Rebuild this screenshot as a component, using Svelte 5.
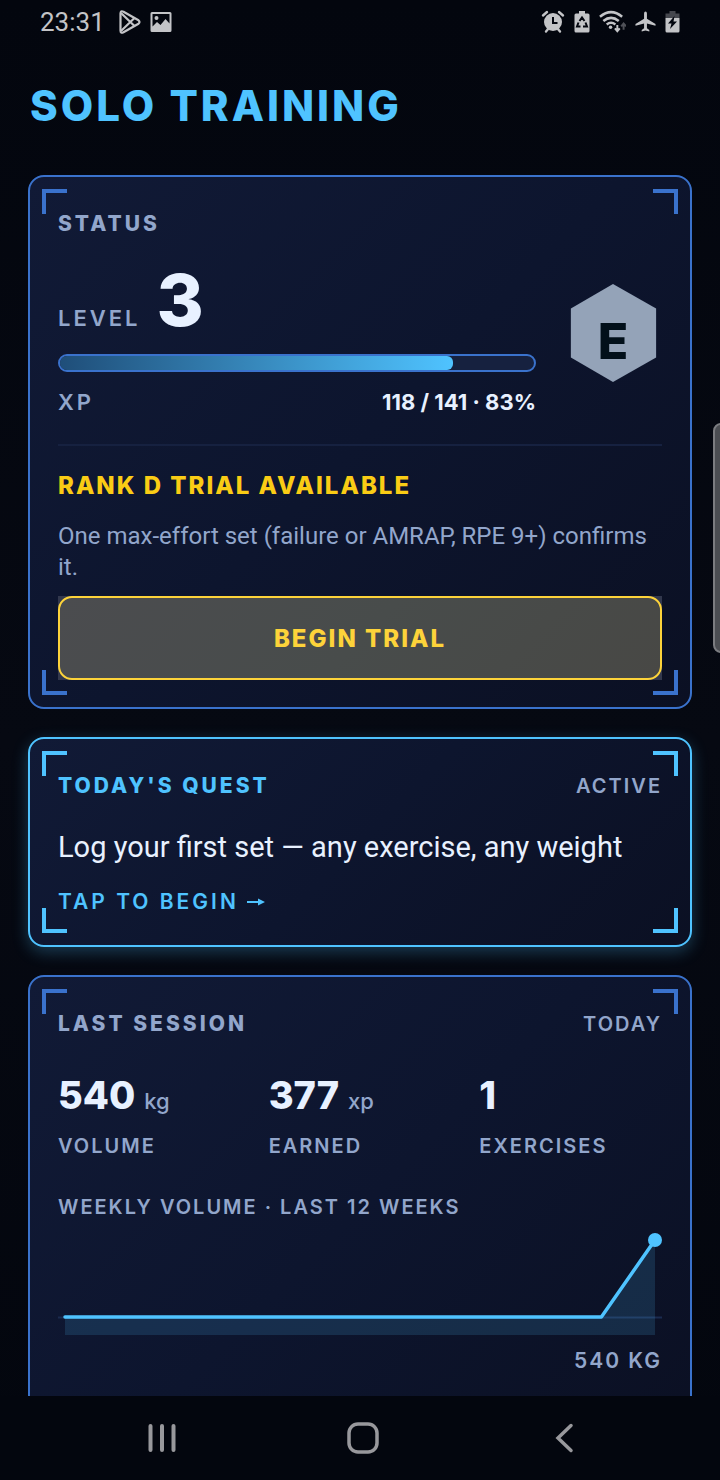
<script lang="ts">
    const level = 3;
    const rank = 'E';
    const xp = { current: 118, needed: 141, percent: 83 };

    const stats = [
        { value: '540', unit: 'kg', label: 'VOLUME' },
        { value: '377', unit: 'xp', label: 'EARNED' },
        { value: '1', unit: '', label: 'EXERCISES' }
    ];

    // twelve weeks, left to right
    const weeks = [0, 0, 0, 0, 0, 0, 0, 0, 0, 0, 0, 540];
    const peak = Math.max(...weeks);
    const points = weeks.map((kg, i) => ({
        x: 7 + (i * 590) / (weeks.length - 1),
        y: 94 - (kg / peak) * 77
    }));
    const line = points.map((p) => `${p.x},${p.y}`).join(' ');
    const last = points[points.length - 1];
</script>

<div class="app">
    <header class="status-bar">
        <div class="status-group">
            <span class="clock">23:31</span>
            <svg class="play" width="22" height="24" viewBox="0 0 22 24" fill="none" stroke="currentColor" stroke-width="2.200" stroke-linejoin="round" aria-hidden="true">
                <path d="M1.500 3.500Q1.500 .2 4.500 1.700L19.500 10.300Q21.500 12 19.500 13.700L4.500 22.300Q1.500 23.800 1.500 20.500Z" />
                <path d="M2 3L15.500 16M2 21L15.500 8" />
            </svg>
            <svg width="22" height="24" viewBox="0 0 22 24" aria-hidden="true">
                <path fill="currentColor" fill-rule="evenodd" d="M2 2h18q1.500 0 1.500 1.500v17q0 1.500-1.500 1.500H2Q.5 22 .5 20.500v-17Q.5 2 2 2ZM2.500 4v12.500l4.500-4.500 3.500 3 5-6 4 4.500V4ZM6.500 6a2 2 0 1 1 0 4a2 2 0 1 1 0-4Z" />
            </svg>
        </div>
        <div class="status-group">
            <svg width="24" height="24" viewBox="0 0 24 24" aria-hidden="true">
                <g stroke="currentColor" stroke-width="2.400" stroke-linecap="round" fill="none">
                    <path d="M2 5.500L6 2M22 5.500L18 2M5 21.500l2.500-3M19 21.500l-2.500-3" />
                </g>
                <circle cx="12" cy="12" r="9" fill="currentColor" />
                <path d="M12 7v6h4.500" stroke="#03060f" stroke-width="2" fill="none" />
            </svg>
            <svg width="16" height="24" viewBox="0 0 16 24" aria-hidden="true">
                <path fill="currentColor" d="M5 1h6v2.500h3q1.500 0 1.500 1.500v16q0 1.500-1.500 1.500H2Q.5 22.500.5 21V5q0-1.500 1.500-1.500h3Z" />
                <g fill="none" stroke="#03060f" stroke-width="2">
                    <path d="M5.500 11L8 7.500l2.500 3.500M4.500 12.500L3 16.500h3.500M9 16.500h4l-1.500-4" />
                </g>
            </svg>
            <svg width="27" height="24" viewBox="0 0 28 24" fill="none" stroke="currentColor" aria-hidden="true">
                <path stroke-width="2.600" d="M1 6.500Q12.500-3 24 6.500M4.500 11Q12.500 4.500 20.500 11M8 14.500Q12.500 11 17 14.500" />
                <circle cx="12" cy="17.500" r="1.800" fill="currentColor" stroke="none" />
                <path stroke-width="2" d="M19 15v6M16.500 18.500L19 21.500l2.500-3" />
                <path stroke-width="2" opacity=".4" d="M25.500 20v-6M23 16.500l2.500-3 2.500 3" />
            </svg>
            <svg width="21" height="24" viewBox="0 0 22 24" aria-hidden="true">
                <path fill="currentColor" d="M11 1q1.500 0 1.500 2v5.500L21.500 14v2l-9-2.500v5L15 20.500V22l-4-1-4 1v-1.500l2.500-2v-5l-9 2.500v-2L9.500 8.500V3Q9.500 1 11 1Z" />
            </svg>
            <svg width="15" height="24" viewBox="0 0 15 24" aria-hidden="true">
                <path fill="currentColor" opacity=".35" d="M4.500 1h6v2.500h4V8H.5V3.500h4Z" />
                <path fill="currentColor" d="M.5 8h14v13q0 1.500-1.500 1.500H2Q.5 22.500.5 21Z" />
                <path fill="#03060f" d="M9.500 6L3 13.500h3.500L5 19l7-7.500H8.500Z" />
            </svg>
        </div>
    </header>

    <main>
        <h1>SOLO TRAINING</h1>

        <section class="card">
            <i class="corner tl"></i><i class="corner tr"></i><i class="corner bl"></i><i class="corner br"></i>
            <div class="card-head">
                <h2>STATUS</h2>
            </div>
            <div class="level-row">
                <div class="progress">
                    <div class="level">
                        <span class="level-label">LEVEL</span>
                        <strong>{level}</strong>
                    </div>
                    <div class="bar" role="progressbar" aria-label="XP" aria-valuenow={xp.percent} aria-valuemin="0" aria-valuemax="100">
                        <div class="fill" style="width: {xp.percent}%"></div>
                    </div>
                    <div class="xp">
                        <span class="xp-label">XP</span>
                        <span class="xp-value">{xp.current} / {xp.needed} · {xp.percent}%</span>
                    </div>
                </div>
                <div class="rank">{rank}</div>
            </div>
            <div class="trial">
                <h3>RANK D TRIAL AVAILABLE</h3>
                <p>One max-effort set (failure or AMRAP, RPE 9+) confirms it.</p>
                <div class="button-back">
                    <button type="button" class="begin">BEGIN TRIAL</button>
                </div>
            </div>
        </section>

        <section class="card active">
            <i class="corner tl"></i><i class="corner tr"></i><i class="corner bl"></i><i class="corner br"></i>
            <div class="card-head">
                <h2>TODAY'S QUEST</h2>
                <span class="tag">ACTIVE</span>
            </div>
            <p class="quest">Log your first set — any exercise, any weight</p>
            <button type="button" class="tap">
                TAP TO BEGIN
                <svg width="18" height="10" viewBox="0 0 18 10" aria-hidden="true">
                    <path d="M0 4h11V1.500L18 5l-7 3.500V6H0Z" fill="currentColor" />
                </svg>
            </button>
        </section>

        <section class="card session">
            <i class="corner tl"></i><i class="corner tr"></i><i class="corner bl"></i><i class="corner br"></i>
            <div class="card-head">
                <h2>LAST SESSION</h2>
                <span class="tag">TODAY</span>
            </div>
            <div class="stats">
                {#each stats as stat}
                    <div>
                        <div class="stat-value">{stat.value}{#if stat.unit}<span>{stat.unit}</span>{/if}</div>
                        <div class="tag">{stat.label}</div>
                    </div>
                {/each}
            </div>
            <div class="tag">WEEKLY VOLUME · LAST 12 WEEKS</div>
            <svg class="chart" viewBox="0 0 604 116" role="img" aria-label="Weekly volume">
                <path d="M0 94.500H604" stroke="#1b2b4f" stroke-width="2" />
                <polygon points="7,112 {line} {last.x},112" fill="#4fc3ff" fill-opacity=".15" />
                <polyline points={line} fill="none" stroke="#4fc3ff" stroke-width="3.500" stroke-linecap="round" stroke-linejoin="round" />
                <circle cx={last.x} cy={last.y} r="7" fill="#4fc3ff" />
            </svg>
            <div class="chart-total">540 KG</div>
        </section>
    </main>

    <div class="edge-handle"></div>

    <nav>
        <button type="button" aria-label="Recent apps">
            <svg width="32" height="32" viewBox="0 0 32 32" fill="none" stroke="currentColor" stroke-width="4" stroke-linecap="round">
                <path d="M4.500 4v24M16 4v24M27.500 4v24" />
            </svg>
        </button>
        <button type="button" aria-label="Home">
            <svg width="32" height="32" viewBox="0 0 32 32" fill="none" stroke="currentColor" stroke-width="3.500">
                <rect x="2" y="2" width="28" height="28" rx="9" />
            </svg>
        </button>
        <button type="button" aria-label="Back">
            <svg width="32" height="32" viewBox="0 0 32 32" fill="none" stroke="currentColor" stroke-width="3.500" stroke-linecap="round">
                <path d="M22 3.500L9 16l13 12.500" />
            </svg>
        </button>
    </nav>
</div>

<style>
    :global(body) {
        background: #03060e;
    }

    .app {
        --accent: #4fc3ff;
        --line: #3a72cc;
        --muted: #92a6cb;
        --text: #e8f1ff;
        --gold: #facc15;
        position: relative;
        display: flex;
        flex-direction: column;
        height: 100vh;
        overflow: hidden;
        background: linear-gradient(180deg, #03060e 0%, #060912 50%, #03060e 100%);
        color: var(--text);
        font-family: Inter, "Liberation Sans", sans-serif;
    }

    h1, h2, h3, p {
        margin: 0;
    }

    button {
        margin: 0;
        border: 0;
        background: none;
        color: inherit;
        font-family: inherit;
        cursor: pointer;
    }

    svg {
        display: block;
        flex: none;
    }

    .status-bar {
        display: flex;
        justify-content: space-between;
        align-items: center;
        flex: none;
        height: 44px;
        padding: 0 40px;
        color: #c3c4c7;
    }

    .status-group {
        display: flex;
        align-items: center;
        gap: 9px;
    }

    .clock {
        font: 26px Roboto, sans-serif;
    }

    .play {
        margin-left: 5px;
    }

    main {
        display: flex;
        flex-direction: column;
        flex: 1;
        gap: 28px;
        min-height: 0;
        overflow: hidden;
        padding: 38px 28px 0;
    }

    h1 {
        margin-bottom: 17px;
        padding-left: 2px;
        color: var(--accent);
        font-size: 42px;
        font-weight: 800;
        line-height: 48px;
        letter-spacing: 3px;
    }

    .card {
        position: relative;
        flex: none;
        padding: 28px 28px 27px;
        border: 2px solid var(--line);
        border-radius: 16px;
        background: linear-gradient(135deg, #111a36 0%, #0d152e 50%, #0b1023 100%);
    }

    .card.active {
        border-color: var(--accent);
        box-shadow: 0 5px 16px rgba(79, 195, 255, 0.28);
    }

    .card.session {
        padding-bottom: 64px;
    }

    .corner {
        position: absolute;
        width: 21px;
        height: 21px;
        border: 0 solid var(--line);
    }

    .active .corner {
        border-color: var(--accent);
    }

    .tl { top: 12px; left: 12px; border-top-width: 4px; border-left-width: 4px; }
    .tr { top: 12px; right: 12px; border-top-width: 4px; border-right-width: 4px; }
    .bl { bottom: 12px; left: 12px; border-bottom-width: 4px; border-left-width: 4px; }
    .br { bottom: 12px; right: 12px; border-bottom-width: 4px; border-right-width: 4px; }

    .card-head {
        display: flex;
        justify-content: space-between;
        align-items: center;
        margin-bottom: 7px;
    }

    h2 {
        color: var(--muted);
        font-size: 21px;
        font-weight: 800;
        line-height: 38px;
        letter-spacing: 3px;
    }

    .active h2 {
        color: var(--accent);
    }

    .tag {
        color: var(--muted);
        font-size: 20px;
        font-weight: 600;
        line-height: 28px;
        letter-spacing: 2px;
    }

    .level-row {
        display: flex;
        align-items: center;
        gap: 28px;
    }

    .progress {
        flex: 1;
    }

    .level {
        display: flex;
        align-items: baseline;
        gap: 16px;
        height: 100px;
        margin-bottom: 4px;
    }

    .level-label, .xp-label {
        color: var(--muted);
        font-size: 22px;
        font-weight: 600;
        letter-spacing: 3px;
    }

    .level strong {
        font-size: 72px;
        font-weight: 800;
        line-height: 100px;
    }

    .bar {
        box-sizing: border-box;
        height: 18px;
        border: 2px solid var(--line);
        border-radius: 9px;
        background: #16213f;
        overflow: hidden;
    }

    .fill {
        height: 100%;
        border-radius: 6px;
        background: linear-gradient(90deg, #1f4e79, var(--accent));
    }

    .xp {
        display: flex;
        justify-content: space-between;
        align-items: baseline;
        margin-top: 16px;
        line-height: 28px;
    }

    .xp-value {
        font-size: 22px;
        font-weight: 700;
    }

    .rank {
        box-sizing: border-box;
        width: 98px;
        height: 98px;
        padding-top: 16px;
        background: #94a3b8;
        clip-path: polygon(50% 0, 94% 25%, 94% 75%, 50% 100%, 7% 75%, 7% 25%);
        color: #02101a;
        font-size: 50px;
        font-weight: 800;
        line-height: 82px;
        text-align: center;
    }

    .trial {
        margin-top: 28px;
        padding-top: 24px;
        border-top: 2px solid #162140;
    }

    h3 {
        color: var(--gold);
        font-size: 24px;
        font-weight: 800;
        line-height: 32px;
        letter-spacing: 2px;
    }

    .trial p {
        margin: 19px 0 13px;
        color: var(--muted);
        font-family: Roboto, sans-serif;
        font-size: 24px;
        line-height: 31px;
    }

    .button-back {
        background: #32384d;
    }

    .begin {
        display: block;
        box-sizing: border-box;
        width: 100%;
        height: 84px;
        border: 2px solid #fdd33a;
        border-radius: 14px;
        background: linear-gradient(135deg, #4b4c4f, #484c4b 50%, #484845);
        color: #fdd33a;
        font-size: 24px;
        font-weight: 800;
        letter-spacing: 2px;
    }

    .quest {
        margin: 20px 0 17px;
        font-family: Roboto, sans-serif;
        font-size: 29px;
        line-height: 44px;
    }

    .tap {
        display: flex;
        align-items: center;
        gap: 8px;
        padding: 0;
        color: var(--accent);
        font-size: 21px;
        font-weight: 600;
        line-height: 32px;
        letter-spacing: 3px;
    }

    .stats {
        display: grid;
        grid-template-columns: repeat(3, 1fr);
        gap: 28px;
        margin: 28px 0 33px;
    }

    .stat-value {
        margin-bottom: 13px;
        font-size: 38px;
        font-weight: 800;
        line-height: 48px;
    }

    .stat-value span {
        margin-left: 9px;
        color: var(--muted);
        font-size: 22px;
        font-weight: 500;
        line-height: 24px;
    }

    .chart {
        width: 100%;
        height: auto;
        margin: 2px 0 8px;
    }

    .chart-total {
        color: var(--muted);
        font-size: 21px;
        font-weight: 600;
        line-height: 28px;
        letter-spacing: 2px;
        text-align: right;
    }

    .edge-handle {
        position: absolute;
        top: 423px;
        right: -12px;
        box-sizing: border-box;
        width: 19px;
        height: 230px;
        border: 2px solid #7b7c80;
        border-radius: 8px;
        background: #4b4d52;
    }

    nav {
        display: grid;
        grid-template-columns: repeat(3, 1fr);
        flex: none;
        height: 84px;
        padding: 0 54px 0 61px;
        background: #03060e;
        color: #98989c;
    }

    nav button {
        display: flex;
        justify-content: center;
        align-items: center;
    }
</style>
